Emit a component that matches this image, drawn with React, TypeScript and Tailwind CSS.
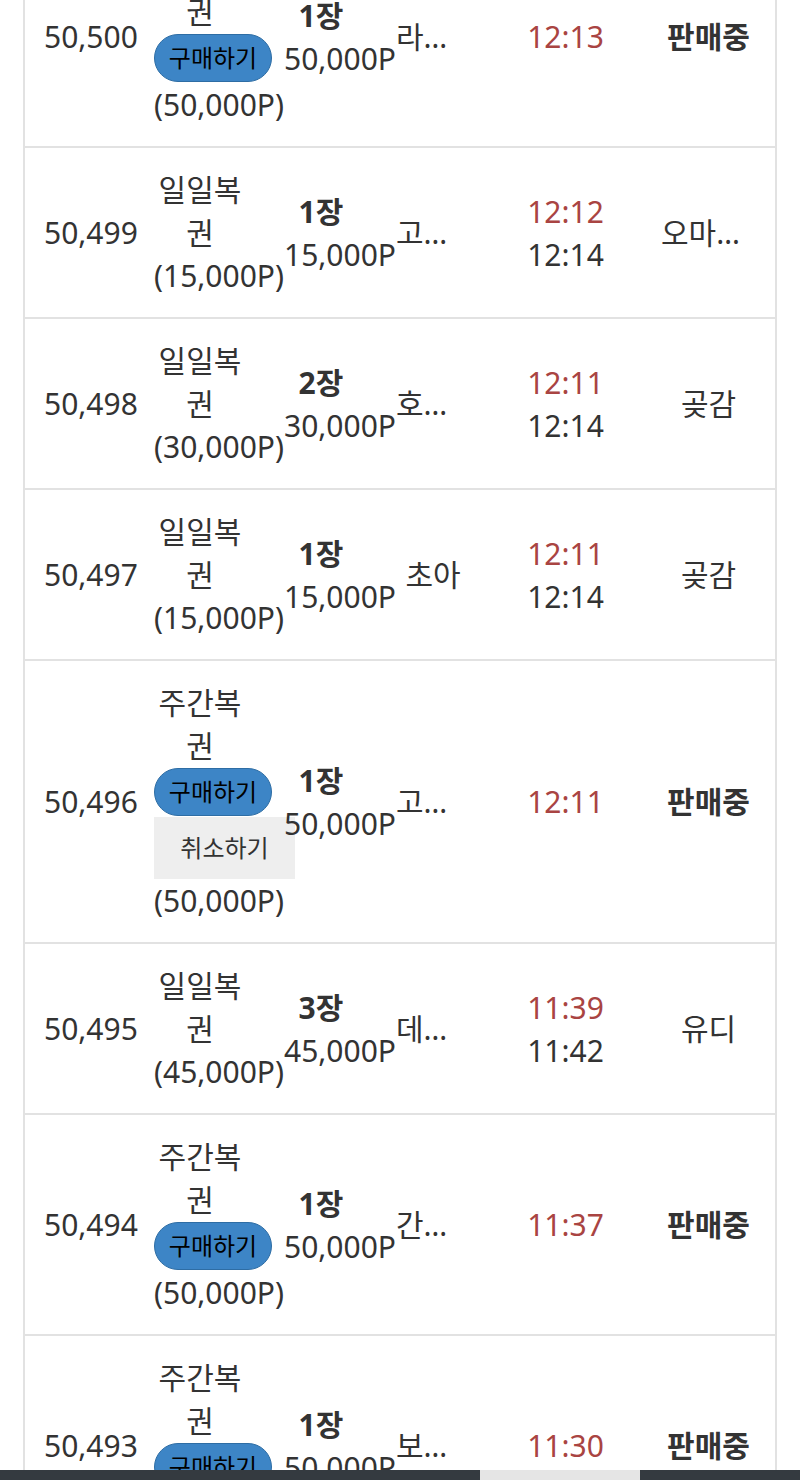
import React from "react";

type Row = {
  no: string;
  kind: string;
  price: string;
  buy?: boolean;
  cancel?: boolean;
  count: string;
  amount: string;
  name: string;
  start: string;
  end?: string;
  status: string;
  selling?: boolean;
};

const rows: Row[] = [
  { no: "50,500", kind: "주간복권", price: "(50,000P)", buy: true, count: "1장", amount: "50,000P", name: "라이언", start: "12:13", status: "판매중", selling: true },
  { no: "50,499", kind: "일일복권", price: "(15,000P)", count: "1장", amount: "15,000P", name: "고양이", start: "12:12", end: "12:14", status: "오마카세" },
  { no: "50,498", kind: "일일복권", price: "(30,000P)", count: "2장", amount: "30,000P", name: "호랑이", start: "12:11", end: "12:14", status: "곶감" },
  { no: "50,497", kind: "일일복권", price: "(15,000P)", count: "1장", amount: "15,000P", name: "초아", start: "12:11", end: "12:14", status: "곶감" },
  { no: "50,496", kind: "주간복권", price: "(50,000P)", buy: true, cancel: true, count: "1장", amount: "50,000P", name: "고구마", start: "12:11", status: "판매중", selling: true },
  { no: "50,495", kind: "일일복권", price: "(45,000P)", count: "3장", amount: "45,000P", name: "데이지", start: "11:39", end: "11:42", status: "유디" },
  { no: "50,494", kind: "주간복권", price: "(50,000P)", buy: true, count: "1장", amount: "50,000P", name: "간장게장", start: "11:37", status: "판매중", selling: true },
  { no: "50,493", kind: "주간복권", price: "(50,000P)", buy: true, count: "1장", amount: "50,000P", name: "보리차", start: "11:30", status: "판매중", selling: true },
];

const App = () => {
  return (
    <div
      className="relative h-[1480px] overflow-hidden bg-white text-[#333] text-[30px] leading-[43px]"
      style={{ fontFamily: '"Noto Sans", "Noto Sans CJK KR", sans-serif' }}
    >
      <div className="mx-[23px] mt-[-73px] border-x-2 border-[#e2e2e2]">
        {rows.map((r) => (
          <div key={r.no} className="flex items-center border-b-2 border-[#e2e2e2] py-[20px]">
            {/* number */}
            <div className="w-[110px] shrink-0 px-[19px] text-center whitespace-nowrap">{r.no}</div>

            {/* kind + buttons */}
            <div className="w-[130px] shrink-0 px-[19px] text-center">
              <div>{r.kind}</div>
              {r.buy && (
                <button className="my-[1px] block w-[118px] h-[48px] rounded-full bg-[#3d85c6] border border-[#2e6da4] text-[24px] leading-[46px] text-black">
                  구매하기
                </button>
              )}
              {r.cancel && (
                <button className="block w-[141px] h-[62px] bg-[#eeeeee] text-[24px] leading-[62px] text-[#333]">
                  취소하기
                </button>
              )}
              <div className="whitespace-nowrap">{r.price}</div>
            </div>

            {/* count */}
            <div className="w-[112px] shrink-0 px-[19px] text-center">
              <div className="font-bold">{r.count}</div>
              <div className="whitespace-nowrap">{r.amount}</div>
            </div>

            {/* name */}
            <div className="w-[112px] shrink-0 px-[19px] text-center">
              <div className="overflow-hidden text-ellipsis whitespace-nowrap">{r.name}</div>
            </div>

            {/* time */}
            <div className="w-[153px] shrink-0 px-[19px] text-center">
              <div className="text-[#a94442]">{r.start}</div>
              {r.end && <div>{r.end}</div>}
            </div>

            {/* status */}
            <div className="w-[133px] shrink-0 px-[19px] text-center">
              <div className={r.selling ? "font-bold overflow-hidden whitespace-nowrap" : "overflow-hidden text-ellipsis whitespace-nowrap"}>
                {r.status}
              </div>
            </div>
          </div>
        ))}
      </div>

      {/* bottom scroll bar */}
      <div className="absolute bottom-0 left-0 right-0 flex h-[10px] bg-[#343a40]">
        <div className="ml-[480px] w-[160px] bg-[#e5e5e5]" />
      </div>
    </div>
  );
};

export default App;
